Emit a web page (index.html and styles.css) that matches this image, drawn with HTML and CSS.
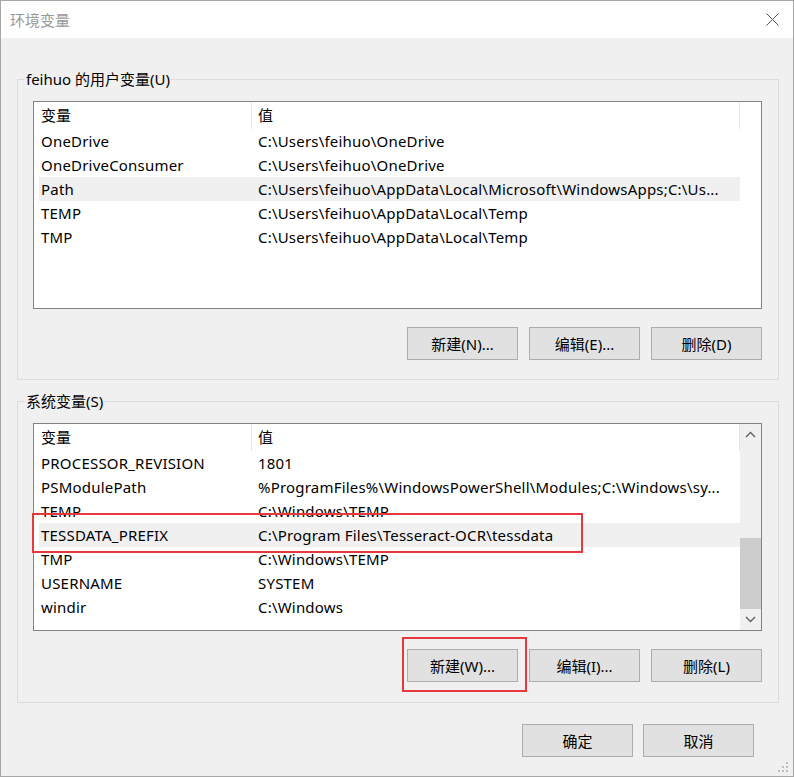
FILE: index.html
```html
<!DOCTYPE html>
<html lang="zh-CN">
<head>
<meta charset="utf-8">
<title>环境变量</title>
<link rel="stylesheet" href="styles.css">
</head>
<body>
<div class="window">
  <div class="titlebar">
    <span class="title">环境变量</span>
    <span class="close">
      <svg width="13" height="13" viewBox="0 0 13 13"><path d="M0.5 0.5 L12.5 12.5 M12.5 0.5 L0.5 12.5" stroke="#555" stroke-width="1" fill="none"/></svg>
    </span>
  </div>
  <div class="content">
    <fieldset class="group group-user">
      <legend>feihuo 的用户变量(U)</legend>
      <div class="list">
        <div class="rows">
          <div class="row header"><div class="c1">变量</div><div class="c2">值</div></div>
          <div class="row"><div class="c1">OneDrive</div><div class="c2">C:\Users\feihuo\OneDrive</div></div>
          <div class="row"><div class="c1">OneDriveConsumer</div><div class="c2">C:\Users\feihuo\OneDrive</div></div>
          <div class="row selected"><div class="c1">Path</div><div class="c2">C:\Users\feihuo\AppData\Local\Microsoft\WindowsApps;C:\Us...</div></div>
          <div class="row"><div class="c1">TEMP</div><div class="c2">C:\Users\feihuo\AppData\Local\Temp</div></div>
          <div class="row"><div class="c1">TMP</div><div class="c2">C:\Users\feihuo\AppData\Local\Temp</div></div>
        </div>
        <div class="gutter"></div>
      </div>
      <div class="btns">
        <button class="btn">新建(N)...</button>
        <button class="btn">编辑(E)...</button>
        <button class="btn">删除(D)</button>
      </div>
    </fieldset>

    <fieldset class="group group-sys">
      <legend>系统变量(S)</legend>
      <div class="list">
        <div class="rows">
          <div class="row header"><div class="c1">变量</div><div class="c2">值</div></div>
          <div class="row"><div class="c1">PROCESSOR_REVISION</div><div class="c2">1801</div></div>
          <div class="row"><div class="c1">PSModulePath</div><div class="c2">%ProgramFiles%\WindowsPowerShell\Modules;C:\Windows\sy...</div></div>
          <div class="row"><div class="c1">TEMP</div><div class="c2">C:\Windows\TEMP</div></div>
          <div class="row selected"><div class="c1">TESSDATA_PREFIX</div><div class="c2">C:\Program Files\Tesseract-OCR\tessdata</div></div>
          <div class="row"><div class="c1">TMP</div><div class="c2">C:\Windows\TEMP</div></div>
          <div class="row"><div class="c1">USERNAME</div><div class="c2">SYSTEM</div></div>
          <div class="row"><div class="c1">windir</div><div class="c2">C:\Windows</div></div>
        </div>
        <div class="scrollbar">
          <div class="sb-arrow"><svg width="11" height="7" viewBox="0 0 11 7"><path d="M1 6 L5.5 1.5 L10 6" stroke="#606060" stroke-width="1.4" fill="none"/></svg></div>
          <div class="sb-track"><div class="sb-thumb"></div></div>
          <div class="sb-arrow"><svg width="11" height="7" viewBox="0 0 11 7"><path d="M1 1 L5.5 5.5 L10 1" stroke="#606060" stroke-width="1.4" fill="none"/></svg></div>
        </div>
      </div>
      <div class="btns">
        <button class="btn">新建(W)...</button>
        <button class="btn">编辑(I)...</button>
        <button class="btn">删除(L)</button>
      </div>
    </fieldset>

    <div class="dialog-btns">
      <button class="btn">确定</button>
      <button class="btn">取消</button>
    </div>
  </div>

  <svg class="grip" width="12" height="12" viewBox="0 0 12 12">
    <rect x="8" y="0" width="2" height="2" fill="#bdbdbd"/>
    <rect x="4" y="4" width="2" height="2" fill="#bdbdbd"/>
    <rect x="8" y="4" width="2" height="2" fill="#bdbdbd"/>
    <rect x="0" y="8" width="2" height="2" fill="#bdbdbd"/>
    <rect x="4" y="8" width="2" height="2" fill="#bdbdbd"/>
    <rect x="8" y="8" width="2" height="2" fill="#bdbdbd"/>
  </svg>
  <div class="mark mark-row"></div>
  <div class="mark mark-btn"></div>
</div>
</body>
</html>
```

FILE: styles.css
```css
* { box-sizing: border-box; }

html, body {
  margin: 0;
  padding: 0;
  background: #f0f0f0;
}

body {
  font-family: "Noto Sans", "Noto Sans CJK SC", sans-serif;
  font-size: 15px;
  color: #000;
}

.window {
  position: relative;
  width: 794px;
  height: 777px;
  border: 1px solid #a6a6a6;
  background: #f0f0f0;
  overflow: hidden;
}

.titlebar {
  height: 37px;
  background: #fff;
  display: flex;
  align-items: center;
  justify-content: space-between;
  padding: 0 14px 0 9px;
}

.title {
  color: #999;
  font-size: 15px;
  line-height: 20px;
}

.close {
  display: flex;
  width: 13px;
  height: 13px;
}

.content {
  padding: 31px 14px 0 16px;
}

.group {
  margin: 0;
  border: 1px solid #dcdcdc;
  padding: 11px 16px 19px 15px;
  min-width: 0;
}

.group-sys {
  margin-top: 11px;
  padding-bottom: 20px;
}

.group legend {
  padding: 0 1px;
  margin-left: -8px;
  line-height: 21px;
  height: 21px;
  font-size: 15px;
}

.list {
  height: 208px;
  border: 1px solid #828282;
  background: #fff;
  display: flex;
}

.rows {
  width: 706px;
  padding-left: 5px;
}

.row {
  display: flex;
  height: 24px;
  line-height: 24px;
  white-space: nowrap;
  letter-spacing: 0.2px;
}

.row.header {
  height: 27px;
  line-height: 27px;
  letter-spacing: 0;
}

.row.selected {
  background: #f0f0f0;
}

.c1 {
  width: 213px;
  padding-left: 2px;
  overflow: hidden;
}

.c2 {
  width: 488px;
  padding-left: 6px;
  overflow: hidden;
}

.header .c1,
.header .c2 {
  border-right: 1px solid #e5e5e5;
}

.gutter {
  flex: 1;
}

.scrollbar {
  flex: 1;
  display: flex;
  flex-direction: column;
  background: #f0f0f0;
}

.sb-arrow {
  height: 21px;
  display: flex;
  align-items: center;
  justify-content: center;
}

.sb-track {
  flex: 1;
  display: flex;
  flex-direction: column;
  justify-content: flex-end;
}

.sb-thumb {
  height: 71px;
  background: #cdcdcd;
}

.btns {
  display: flex;
  justify-content: flex-end;
  gap: 11px;
  margin-top: 18px;
}

.btn {
  width: 111px;
  height: 33px;
  border: 1px solid #adadad;
  background: #e1e1e1;
  font-family: "Noto Sans", "Noto Sans CJK SC", sans-serif;
  font-size: 15px;
  color: #000;
  padding: 0;
  margin: 0;
  border-radius: 0;
}

.dialog-btns {
  display: flex;
  justify-content: flex-end;
  gap: 10px;
  margin-top: 21px;
  padding-right: 25px;
}

.grip {
  position: absolute;
  right: 3px;
  bottom: 2px;
}

.mark {
  position: absolute;
  border: 2px solid #e5393d;
}

.mark-row {
  left: 31px;
  top: 512px;
  width: 551px;
  height: 40px;
}

.mark-btn {
  left: 401px;
  top: 636px;
  width: 125px;
  height: 55px;
}
```
